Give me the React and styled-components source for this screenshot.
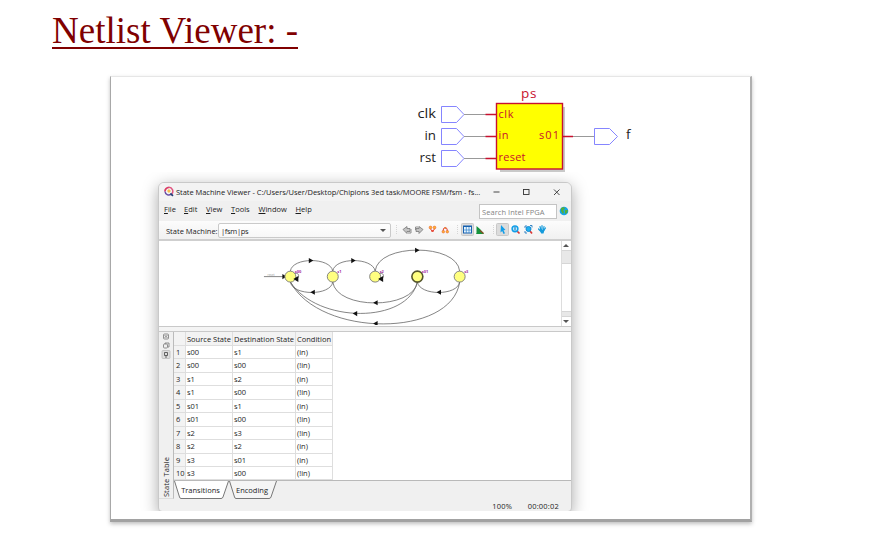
import React from "react";
import styled, { createGlobalStyle, css } from "styled-components";

const Global = createGlobalStyle`
  * { box-sizing: border-box; }
  body { margin: 0; background: #fff; overflow: hidden; }
`;

const Page = styled.main`
  width: 876px;
  height: 548px;
  padding: 10px 0 0 52px;
  font-family: "Open Sans", "Noto Sans", sans-serif;
  color: #1c1c1c;
`;
const Title = styled.h1`
  margin: 0;
  width: 246px;
  height: 39px;
  border-bottom: 2px solid #800000;
  font: 400 37px/42px "Liberation Serif", serif;
  letter-spacing: 0.02px;
  white-space: nowrap;
  color: #800000;
`;
const Card = styled.section`
  width: 642px;
  height: 446px;
  margin: 27px 0 0 58px;
  border: solid;
  border-width: 1px 2px 3px 1px;
  border-color: #e6e6e6 #b0b0b0 #a2a2a2 #a8a8a8;
  background: #fff;
  box-shadow: 0 2px 4px rgba(0, 0, 0, 0.25);
`;
const Schematic = styled.svg`
  display: block;
  width: 639px;
  height: 95px;
  font-family: "Open Sans", sans-serif;
`;
const Capture = styled.div`
  height: 339px;
  margin-left: 28px;
  width: 460px;
  padding: 10px 0 0 19px;
  overflow: hidden;
`;
const Window = styled.div`
  width: 414px;
  height: 330px;
  display: flex;
  flex-direction: column;
  border: 1px solid #c9c9c9;
  border-radius: 6px 6px 4px 4px;
  background: #f0f0f0;
  box-shadow: 0 4px 16px rgba(0, 0, 0, 0.34);
  overflow: hidden;
  font-size: 7.5px;
  font-weight: 500;
  line-height: 10px;
  white-space: nowrap;
`;
const TitleBar = styled.div`
  flex: 0 0 18px;
  display: flex;
  align-items: center;
  padding: 0 10px 1px 5px;
  background: #f3f3f3;
`;
const Caption = styled.span`
  width: 313px;
  margin-left: 2px;
  letter-spacing: -0.03px;
`;
const WinButtons = styled.svg`
  width: 70px;
  height: 10px;
  margin-left: 5px;
  flex: none;
`;
const MenuBar = styled.div`
  flex: 0 0 20px;
  display: flex;
  padding: 2px 2px 0 5px;
`;
const MenuItem = styled.span`
  width: ${(p) => p.$w}px;
  padding-top: 1px;
`;
const Search = styled.div`
  width: 78px;
  height: 15px;
  margin-top: 1px;
  margin-left: auto;
  padding: 2px 2px 0;
  border: 1px solid #c4c4c4;
  background: #fff;
  color: #858585;
  letter-spacing: 0.05px;
`;
const Globe = styled.svg`
  width: 10px;
  height: 10px;
  margin: 3px 0 0 2px;
`;
const ToolBar = styled.div`
  flex: 0 0 20px;
  display: flex;
  align-items: center;
  padding-left: 7px;
  background: linear-gradient(#fcfcfc, #f1f1f1);
  border-bottom: 2px solid #cfcfcf;
`;
const ToolLabel = styled.span`
  width: 52px;
  padding-top: 1px;
`;
const Select = styled.div`
  width: 173px;
  height: 15px;
  padding: 3px 2px 2px;
  border: 1px solid #cacaca;
  border-radius: 2px;
  background: linear-gradient(#fff, #f7f7f7);
  display: flex;
  justify-content: space-between;
  align-items: center;
  letter-spacing: -0.3px;
`;
const Arrow = styled.i`
  border: solid transparent;
  border-width: 3px 3px 0;
  border-top-color: #555;
  margin-right: 2px;
  ${(p) => p.$up && css`transform: rotate(180deg);`}
`;
const Tools = styled.svg`
  width: 166px;
  height: 16px;
  margin-left: 3px;
`;
const GraphPane = styled.div`
  flex: 0 0 85px;
  display: flex;
  background: #fff;
  border-bottom: 1px solid #c9c9c9;
`;
const Graph = styled.svg`
  width: 403px;
  height: 84px;
  font-family: "Open Sans", sans-serif;
`;
const Scroll = styled.div`
  width: 10px;
  border-left: 1px solid #ddd;
  display: flex;
  flex-direction: column;
`;
const ScrollEnd = styled.div`
  height: 9px;
  display: flex;
  align-items: center;
  justify-content: center;
  padding-left: 1px;
`;
const Thumb = styled.div`
  height: ${(p) => p.$h}px;
  margin-top: ${(p) => p.$gap || 0}px;
  background: #e8e8e8;
  border: solid #d6d6d6;
  border-width: 1px 0;
`;
const Splitter = styled.div`
  flex: 0 0 5px;
  border-bottom: 1px solid #c9c9c9;
  background: #f4f4f4;
`;
const Dock = styled.div`
  flex: 0 0 167px;
  display: flex;
`;
const Side = styled.div`
  width: 15px;
  display: flex;
  flex-direction: column;
  align-items: center;
  justify-content: space-between;
  border-right: 1px solid #bbb;
  border-bottom: 1px solid #ddd;
  padding: 0 1px 1px 0;
`;
const SideIcons = styled.svg`
  width: 12px;
  height: 28px;
`;
const SideLabel = styled.span`
  writing-mode: vertical-rl;
  transform: rotate(180deg);
  letter-spacing: 0.12px;
`;
const DockBody = styled.div`
  flex: 1;
`;
const TableArea = styled.div`
  height: 149px;
  background: #fff;
  border-bottom: 1px solid #b9b9b9;
`;
const Row = styled.div`
  display: grid;
  grid-template-columns: 12px 47px 63px 37px;
  grid-template-rows: 100%;
  width: 159px;
  height: ${(p) => p.$h}px;
  line-height: 13px;
`;
const Cell = styled.span`
  padding-left: ${(p) => (p.$index ? 2 : 1)}px;
  border: solid #dedede;
  border-width: 0 1px 1px 0;
  background: ${(p) => (p.$index ? "#f3f3f3" : "#fff")};
  ${(p) => p.$head && css`background: #f3f3f3; letter-spacing: 0; line-height: 15px;`}
`;
const TabBar = styled.div`
  display: flex;
  height: 18px;
`;
const Tab = styled.div`
  position: relative;
  width: ${(p) => p.$w}px;
  height: 18px;
  padding: 4px 2px 0 0;
  text-align: center;
  svg { position: absolute; inset: 0; width: 100%; height: 100%; }
  span { position: relative; }
`;
const Status = styled.div`
  flex: 1;
  display: flex;
  justify-content: flex-end;
  gap: 15.5px;
  padding: 2px 12px 0 0;
  letter-spacing: 0.2px;
`;

const rows = [
  ["s00", "s1", "(in)"], ["s00", "s00", "(!in)"], ["s1", "s2", "(in)"],
  ["s1", "s00", "(!in)"], ["s01", "s1", "(in)"], ["s01", "s00", "(!in)"],
  ["s2", "s3", "(!in)"], ["s2", "s2", "(in)"], ["s3", "s01", "(in)"],
  ["s3", "s00", "(!in)"],
];
const rowHeights = [13, 14, 13, 14, 13, 14, 13, 14, 13, 13];
const menus = [["File", 20], ["Edit", 22], ["View", 25], ["Tools", 27.5], ["Window", 37], ["Help", 25]];

const inputs = [["clk", 37.5, 417.5], ["in", 59.5, 424.5], ["rst", 81.5, 419.5]];

function SchematicView() {
  return (
    <Schematic viewBox="111 77 639 95">
      <rect x="500" y="107" width="65" height="65" fill="#c9c9c9" />
      <rect x="496.5" y="103.5" width="66" height="65.5" fill="#ff0" stroke="#c8102e" strokeWidth="1.4" />
      {inputs.map(([name, y, x]) => (
        <g key={name}>
          <text x={x} y={y + 80.5} fontSize="13.5" fill="#222" fontWeight="500" textLength={436 - x} lengthAdjust="spacingAndGlyphs">{name}</text>
          <path d={`M441.5 ${y + 69}h15l7.500 8-7.500 8h-15z`} fill="#fff" stroke="#8585ff" />
          <path d={`M464 ${y + 77}h22`} stroke="#999" />
          <path d={`M485.500 ${y + 77}h11`} stroke="#c8102e" strokeWidth="1.500" />
        </g>
      ))}
      <g fill="#c8102e" fontWeight="500">
        <text x="521" y="98" fontSize="13.5" textLength="15.500">ps</text>
        <text x="498.500" y="117.500" fontSize="11" textLength="15">clk</text>
        <text x="498.500" y="139" fontSize="11" textLength="10">in</text>
        <text x="498.500" y="161" fontSize="11" textLength="27">reset</text>
        <text x="539" y="139" fontSize="11" textLength="20">s01</text>
      </g>
      <path d="M573 136.500h21" stroke="#999" />
      <path d="M563 136.500h10" stroke="#c8102e" strokeWidth="1.500" />
      <path d="M594.500 128.500h15l8 8-8 8h-15z" fill="#fff" stroke="#8585ff" />
      <text x="626" y="139" fontSize="13.500" fill="#222" fontWeight="500">f</text>
    </Schematic>
  );
}

const nodes = [[290, "s00"], [332.5, "s1"], [375, "s2"], [417.3, "s01"], [459.7, "s3"]];
const right = [[309.5, 260.5], [352, 260.5], [416, 250.2]];
const left = [[313.5, 292.3], [376.5, 302.8], [356, 313.7], [376.5, 323.7], [440, 292.3]];

function StateGraph() {
  return (
    <Graph viewBox="158.3 241 403 84">
      <g fill="none" stroke="#666" strokeWidth="0.8">
        <path d="M263.500 276.600h22" />
        <path d="M290 271c2-14 40-14 42.500 0M332.500 271c2-14 40-14 42.500 0M375 271c3-28 82-28 84.700 0" />
        <path d="M332.500 282c-2 14-40 14-42.500 0M459.700 282c-2 14-40 14-42.400 0M417.300 282c-4 28-81 28-84.800 0" />
        <path d="M417.300 282c-10 42-100 42-127.300 0M459.700 282c-8 56-140 56-169.700 0" />
        <path d="M294 274c5-3 6 5 1 5M379 274c5-3 6 5 1 5" />
      </g>
      <g fill="#111">
        {right.map(([x, y]) => <path key={x} d={`M${x - 1} ${y - 2.6}l4.500 2.600-4.500 2.600z`} />)}
        {left.map(([x, y]) => <path key={`${x}-${y}`} d={`M${x + 1} ${y - 2.6}l-4.500 2.600 4.500 2.600z`} />)}
        <path d="M282 274l4 2.600-4 2.600z" />
      </g>
      {nodes.map(([x, name], i) => (
        <g key={name}>
          <circle cx={x} cy="276.600" r="5.500" fill="#ffff80" stroke={i === 3 ? "#55552c" : "#777"} strokeWidth={i === 3 ? 1.6 : 0.9} />
          <text x={x + 4.5} y="273" fontSize="4" fontWeight="700" fill="#a4309f">{name}</text>
        </g>
      ))}
      <path d="M293 279l5-3v6zM378 279l5-3v6z" fill="#111" />
      <text x="267" y="275.500" fontSize="3" fill="#999">reset</text>
    </Graph>
  );
}

function ToolIcons() {
  return (
    <Tools viewBox="394 223 166 16">
      <g stroke="#d5d5d5" strokeDasharray="1 1"><path d="M396.500 226v9M457.500 226v9M493.500 226v9" /></g>
      <g fill="#c4c4c4" stroke="#777" strokeWidth=".8">
        <path d="M403 230.500l4-3v2h3v3h-3v2z" /><path d="M423 230.500l-4-3v2h-3v3h3v2z" />
        <path d="M408 234h3v-4M415.500 231v-3h3" fill="none" />
      </g>
      <path d="M430 229l2.500 4 2.500-4M443 232.500q0-4 2.200-4t2.300 4" fill="none" stroke="#e23c34" />
      <g fill="#ffb52e" stroke="#e9653b" strokeWidth=".6">
        <circle cx="430.500" cy="228.500" r="1.400" /><circle cx="434.500" cy="228.500" r="1.400" />
        <circle cx="443.300" cy="232.700" r="1.300" /><circle cx="447.300" cy="232.700" r="1.300" />
      </g>
      <circle cx="432.500" cy="232" r="1.100" fill="#e8513c" /><circle cx="445.300" cy="229" r="1.100" fill="#e8813c" />
      <rect x="461.500" y="224.500" width="12" height="12" rx="1" fill="#dcdcdc" stroke="#c8c8c8" />
      <rect x="463.500" y="227" width="8" height="7" fill="#e9f6ff" stroke="#1761b0" />
      <path d="M463 227.500h9" stroke="#1761b0" /><path d="M463.500 231h8M466.300 228v6M469 228v6" stroke="#2e80ca" strokeWidth=".7" />
      <path d="M476.500 234v-7l4 3.500 3.500 4.500h-8z" fill="#16933d" /><path d="M480 231.500l3.500 3" stroke="#8c4a22" strokeWidth="1.300" />
      <rect x="496.500" y="224.500" width="12" height="12" rx="1" fill="#dcdcdc" stroke="#c8c8c8" />
      <path d="M501 226l4.500 5-2 .3 1.500 3-1.500.7-1.300-3-1.700 1.500z" fill="#129ee8" />
      <path d="M517 232l2.500 2.500M530 232l2 2.500" stroke="#da3836" strokeWidth="1.700" />
      <circle cx="515" cy="229.800" r="2.900" fill="#baf0ff" stroke="#129ee8" strokeWidth="1.500" /><path d="M515 228v3.500" stroke="#1761b0" />
      <circle cx="528.500" cy="230" r="2.500" fill="#20b1ef" stroke="#148bd4" />
      <path d="M525 229v-2h2M530 226.500h2v2M525 232v2h2" fill="none" stroke="#247ac0" strokeWidth=".9" />
      <path d="M538.500 230l2 2M540 227.500l1 4M542 226.500v5M544 227.500l-.6 4M545.500 229l-2 3" stroke="#159bdc" strokeWidth="1.200" strokeLinecap="round" />
      <path d="M539.500 231h5l-1 3.500h-2.300z" fill="#159bdc" />
    </Tools>
  );
}

function TabItem({ w, label, active }) {
  return (
    <Tab $w={w}>
      <svg viewBox={`0 0 ${w} 18`}>
        <path d={`M.5 0l5 16q.4 1.500 1.500 1.500h${w - 15}q1.500 0 2-1.500l5.500-16`} fill={active ? "#fff" : "#f5f5f5"} stroke="#777" />
      </svg>
      <span>{label}</span>
    </Tab>
  );
}

export default function App() {
  return (
    <Page>
      <Global />
      <Title>Netlist Viewer: -</Title>
      <Card>
        <SchematicView />
        <Capture>
          <Window>
            <TitleBar>
              <svg width="10" height="11" viewBox="0 0 10 11">
                <path d="M1 5.500a4 4 0 0 1 4-4.200" fill="none" stroke="#db3c66" strokeWidth="1.800" />
                <path d="M5 1.300a4 4 0 0 1 3 6.500" fill="none" stroke="#e05580" strokeWidth="1.500" />
                <path d="M1 5.500a4 4 0 0 0 6 3" fill="none" stroke="#6850a7" strokeWidth="1.500" />
                <path d="M3 5l2-2 2 2-2 2z" fill="#f7bd49" />
                <path d="M6.500 7.500l2.500 2.500" stroke="#273c75" strokeWidth="1.800" />
              </svg>
              <Caption>State Machine Viewer - C:/Users/User/Desktop/Chipions 3ed task/MOORE FSM/fsm - fs...</Caption>
              <WinButtons viewBox="0 0 70 10" fill="none" stroke="#333" strokeWidth=".9">
                <path d="M2.500 5h6M63 2.500l5.500 5.500M68.500 2.500l-5.500 5.500" /><rect x="32.500" y="2.500" width="5.500" height="5" />
              </WinButtons>
            </TitleBar>
            <MenuBar>
              {menus.map(([name, w]) => <MenuItem key={name} $w={w}><u>{name[0]}</u>{name.slice(1)}</MenuItem>)}
              <Search>Search Intel FPGA</Search>
              <Globe viewBox="0 0 10 10">
                <circle cx="5" cy="5" r="4.300" fill="#14a5e5" />
                <path d="M2 2l3-1 1 2-2 1 1 2-1 2-2-3zM6 4l3 0-1 3-2 1z" fill="#53ae3b" />
              </Globe>
            </MenuBar>
            <ToolBar>
              <ToolLabel>State Machine:</ToolLabel>
              <Select>|fsm|ps<Arrow /></Select>
              <ToolIcons />
            </ToolBar>
            <GraphPane>
              <StateGraph />
              <Scroll>
                <ScrollEnd><Arrow $up /></ScrollEnd>
                <Thumb $h={14} />
                <Thumb $h={6} $gap={47} />
                <ScrollEnd><Arrow /></ScrollEnd>
              </Scroll>
            </GraphPane>
            <Splitter />
            <Dock>
              <Side>
                <SideIcons viewBox="0 0 12 28" fill="none" stroke="#777" strokeWidth=".8">
                  <rect x="3.500" y="2" width="5" height="5" rx="1" /><path d="M4.500 3l3 3M7.500 3l-3 3" />
                  <rect x="3.500" y="12" width="4" height="4" rx="1" /><path d="M5 12v-1h4v4h-1" />
                  <rect x="2" y="18.500" width="8" height="8" rx="1" fill="#ddd" stroke="#bbb" />
                  <path d="M4.500 20.500v3h3v-3zM6 23.500v2.500" stroke="#444" />
                </SideIcons>
                <SideLabel>State Table</SideLabel>
              </Side>
              <DockBody>
                <TableArea>
                  <Row $h={14}>
                    <Cell $head $index />
                    <Cell $head>Source State</Cell>
                    <Cell $head>Destination State</Cell>
                    <Cell $head>Condition</Cell>
                  </Row>
                  {rows.map((r, i) => (
                    <Row key={i} $h={rowHeights[i]}>
                      <Cell $index>{i + 1}</Cell>
                      {r.map((v, j) => <Cell key={j}>{v}</Cell>)}
                    </Row>
                  ))}
                </TableArea>
                <TabBar>
                  <TabItem w={55} label="Transitions" active />
                  <TabItem w={48} label="Encoding" />
                </TabBar>
              </DockBody>
            </Dock>
            <Status><span>100%</span><span>00:00:02</span></Status>
          </Window>
        </Capture>
      </Card>
    </Page>
  );
}
